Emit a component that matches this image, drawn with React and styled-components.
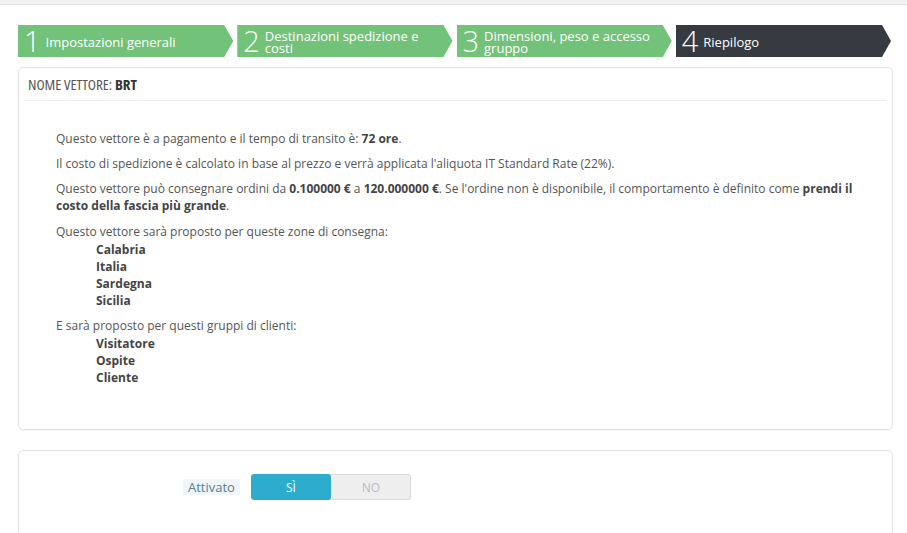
import React from 'react';
import styled, { createGlobalStyle, css } from 'styled-components';

const GlobalStyle = createGlobalStyle`
    html, body {
        margin: 0;
        padding: 0;
        background: #ffffff;
    }
    body {
        font-family: "Open Sans", "Liberation Sans", sans-serif;
        font-size: 12px;
        color: #555555;
    }
`;

const TopBar = styled.div`
    height: 4px;
    background: #f2f2f2;
    border-bottom: 1px solid #e2e2e2;
`;
const Page = styled.div`
    width: 875px;
    padding: 20px 0 0 18px;
`;
const Steps = styled.ol`
    display: grid;
    grid-template-columns: repeat(4, 1fr);
    gap: 4px;
    width: 873px;
    margin: 0 0 10px;
    padding: 0;
    list-style: none;
`;
const Step = styled.li`
    display: flex;
    align-items: center;
    height: 32px;
    padding: 0 20px 0 6px;
    background: #72c279;
    color: #ffffff;
    clip-path: polygon(0 0, calc(100% - 9px) 0, 100% 50%, calc(100% - 9px) 100%, 0 100%);

    ${props => props.current && css`
        background: #363a41;
    `}
`;
const StepNumber = styled.span`
    font-size: 29px;
    font-weight: 300;
    line-height: 32px;
    margin-right: 5px;
`;
const StepLabel = styled.span`
    font-size: 13px;
    line-height: 12px;
    padding-top: 1px;
`;
const Panel = styled.section`
    border: 1px solid #e2e2e2;
    border-radius: 5px;
    background: #ffffff;
    box-shadow: 0 1px 1px rgba(0, 0, 0, 0.04);
    padding: 0 5px;
    margin-bottom: 20px;
`;
const PanelHeading = styled.h3`
    margin: 0;
    height: 32px;
    line-height: 32px;
    padding-left: 4px;
    border-bottom: 1px solid #eeeeee;
    font-family: "Open Sans", sans-serif;
    font-stretch: 75%;
    font-size: 15px;
    font-weight: normal;
    color: #555555;
    text-transform: uppercase;

    b {
        color: #333333;
    }
`;
const Summary = styled.div`
    padding: 29px 0 35px 32px;
    line-height: 17px;

    p {
        margin: 0 0 8px;
    }
    p:last-of-type {
        margin-bottom: 9px;
    }
    b {
        color: #444444;
    }
`;
const Zones = styled.ul`
    margin: 0 0 8px;
    padding: 1px 0 0 40px;
    list-style: none;
    font-weight: bold;
    color: #444444;
`;
const FormRow = styled.div`
    display: flex;
    align-items: center;
    padding: 23px 0 60px 159px;
`;
const Label = styled.label`
    padding: 1px 5px;
    margin-right: 11px;
    background: #eef6fa;
    color: #5b7d8f;
    font-size: 13px;
    line-height: 14px;
`;
const Switch = styled.div`
    display: flex;
    width: 160px;
    height: 26px;
    border-radius: 3px;
    overflow: hidden;
    background: #eeeeee;
    box-shadow: inset 0 0 0 1px #dddddd;
`;
const SwitchOption = styled.span`
    flex: 1;
    display: flex;
    align-items: center;
    justify-content: center;
    font-size: 12px;
    text-transform: uppercase;
    color: #bbbbbb;

    ${props => props.active && css`
        background: #2eacce;
        color: #ffffff;
        border-radius: 3px;
    `}
`;

const steps = [
    'Impostazioni generali',
    'Destinazioni spedizione e costi',
    'Dimensioni, peso e accesso gruppo',
    'Riepilogo'
];

export default function App(){
    return (
        <>
            <GlobalStyle />
            <TopBar />
            <Page>
                <Steps>
                    {steps.map((label, i) => (
                        <Step key={label} current={i === steps.length - 1}>
                            <StepNumber>{i + 1}</StepNumber>
                            <StepLabel>{label}</StepLabel>
                        </Step>
                    ))}
                </Steps>
                <Panel>
                    <PanelHeading>Nome vettore: <b>BRT</b></PanelHeading>
                    <Summary>
                        <p>Questo vettore è a pagamento e il tempo di transito è: <b>72 ore</b>.</p>
                        <p>Il costo di spedizione è calcolato in base al prezzo e verrà applicata l'aliquota IT Standard Rate (22%).</p>
                        <p>Questo vettore può consegnare ordini da <b>0.100000 €</b> a <b>120.000000 €</b>. Se l'ordine non è disponibile, il comportamento è definito come <b>prendi il costo della fascia più grande</b>.</p>
                        Questo vettore sarà proposto per queste zone di consegna:
                        <Zones>
                            <li>Calabria</li>
                            <li>Italia</li>
                            <li>Sardegna</li>
                            <li>Sicilia</li>
                        </Zones>
                        E sarà proposto per questi gruppi di clienti:
                        <Zones>
                            <li>Visitatore</li>
                            <li>Ospite</li>
                            <li>Cliente</li>
                        </Zones>
                    </Summary>
                </Panel>
                <Panel>
                    <FormRow>
                        <Label>Attivato</Label>
                        <Switch>
                            <SwitchOption active>Sì</SwitchOption>
                            <SwitchOption>No</SwitchOption>
                        </Switch>
                    </FormRow>
                </Panel>
            </Page>
        </>
    );
}
